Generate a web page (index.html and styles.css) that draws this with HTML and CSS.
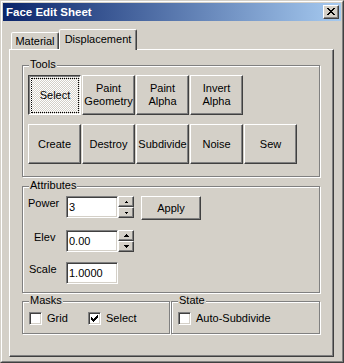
FILE: index.html
```html
<!DOCTYPE html>
<html lang="en">
<head>
<meta charset="utf-8">
<title>Face Edit Sheet</title>
<link rel="stylesheet" href="styles.css">
</head>
<body>
<div class="window">
  <div class="frame">
    <div class="titlebar">
      <span class="title">Face Edit Sheet</span>
      <button class="close raised" aria-label="Close">
        <svg width="8" height="7" viewBox="0 0 8 7"><path fill="#000" d="M0 0h2v1H0zM6 0h2v1H6zM1 1h2v1H1zM5 1h2v1H5zM2 2h4v1H2zM3 3h2v1H3zM2 4h4v1H2zM1 5h2v1H1zM5 5h2v1H5zM0 6h2v1H0zM6 6h2v1H6z"/></svg>
      </button>
    </div>
    <div class="client">
      <div class="tabs">
        <div class="tab tab-material">Material</div>
        <div class="tab tab-active">Displacement</div>
      </div>
      <div class="panel">
        <div class="group tools">
          <span class="glabel">Tools</span>
          <div class="btn-row">
            <button class="tool pressed"><span class="focus">Select</span></button>
            <button class="tool raised">Paint<br>Geometry</button>
            <button class="tool raised">Paint<br>Alpha</button>
            <button class="tool raised">Invert<br>Alpha</button>
          </div>
          <div class="btn-row">
            <button class="tool raised">Create</button>
            <button class="tool raised">Destroy</button>
            <button class="tool raised">Subdivide</button>
            <button class="tool raised">Noise</button>
            <button class="tool raised">Sew</button>
          </div>
        </div>
        <div class="group attrs">
          <span class="glabel">Attributes</span>
          <div class="arow">
            <span class="alabel lbl-power">Power</span>
            <div class="field">3</div>
            <div class="spin">
              <button class="spin-btn raised" aria-label="Up"><svg width="3" height="2" viewBox="0 0 3 2"><path d="M1 0h1v1H1zM0 1h3v1H0z"/></svg></button>
              <button class="spin-btn raised" aria-label="Down"><svg width="3" height="2" viewBox="0 0 3 2"><path d="M0 0h3v1H0zM1 1h1v1H1z"/></svg></button>
            </div>
            <button class="apply raised">Apply</button>
          </div>
          <div class="arow">
            <span class="alabel lbl-elev">Elev</span>
            <div class="field">0.00</div>
            <div class="spin">
              <button class="spin-btn raised" aria-label="Up"><svg width="5" height="3" viewBox="0 0 5 3"><path d="M2 0h1v1H2zM1 1h3v1H1zM0 2h5v1H0z"/></svg></button>
              <button class="spin-btn raised" aria-label="Down"><svg width="5" height="3" viewBox="0 0 5 3"><path d="M0 0h5v1H0zM1 1h3v1H1zM2 2h1v1H2z"/></svg></button>
            </div>
          </div>
          <div class="arow">
            <span class="alabel lbl-scale">Scale</span>
            <div class="field">1.0000</div>
          </div>
        </div>
        <div class="bottom">
          <div class="group masks">
            <span class="glabel">Masks</span>
            <div class="checks">
              <label class="check check-grid"><span class="cb"></span>Grid</label>
              <label class="check"><span class="cb"><svg width="7" height="7" viewBox="0 0 7 7"><path d="M6 0h1v1H6zM5 1h2v1H5zM0 2h1v1H0zM4 2h3v1H4zM0 3h2v1H0zM3 3h3v1H3zM0 4h5v1H0zM1 5h3v1H1zM2 6h1v1H2z"/></svg></span>Select</label>
            </div>
          </div>
          <div class="group state">
            <span class="glabel">State</span>
            <div class="checks">
              <label class="check"><span class="cb"></span>Auto-Subdivide</label>
            </div>
          </div>
        </div>
      </div>
    </div>
  </div>
</div>
</body>
</html>
```
FILE: styles.css
```css
* { box-sizing: border-box; }
html, body { margin: 0; padding: 0; }
body {
  background: #d4d0c8;
  font-family: "Liberation Sans", Arial, sans-serif;
  font-size: 11px;
  color: #000;
}
button {
  font: inherit;
  color: inherit;
  margin: 0;
  padding: 0;
  background: #d4d0c8;
  line-height: 13px;
}
.raised {
  border: 1px solid;
  border-color: #fff #404040 #404040 #fff;
  box-shadow: inset -1px -1px 0 #808080;
  background: #d4d0c8;
}
.window {
  width: 344px;
  height: 363px;
  border: 1px solid;
  border-color: #d4d0c8 #404040 #404040 #d4d0c8;
  background: #d4d0c8;
}
.frame {
  height: 100%;
  border: 1px solid;
  border-color: #fff #808080 #808080 #fff;
  padding: 1px;
  display: flex;
  flex-direction: column;
}
.titlebar {
  flex: none;
  height: 18px;
  display: flex;
  align-items: center;
  justify-content: space-between;
  padding: 0 2px 0 3px;
  background: linear-gradient(to right, #0a246a, #a6caf0);
}
.title {
  color: #fff;
  font-weight: bold;
  font-size: 11.5px;
  line-height: 13px;
}
.close {
  width: 16px;
  height: 14px;
  display: flex;
  align-items: flex-start;
  justify-content: flex-start;
  padding: 2px 0 0 3px;
}
.close svg { display: block; }
.client {
  flex: 1;
  display: flex;
  flex-direction: column;
  padding: 8px 7px 3px 6px;
}
.tabs {
  flex: none;
  height: 20px;
  display: flex;
  align-items: flex-end;
  padding-left: 2px;
}
.tab {
  height: 17px;
  border: 1px solid;
  border-bottom: 0;
  border-color: #fff #404040 transparent #fff;
  box-shadow: inset -1px 0 0 #808080;
  border-radius: 2px 2px 0 0;
  background: #d4d0c8;
  text-align: center;
  line-height: 13px;
  padding-top: 2px;
}
.tab-material { width: 48px; }
.tab-active {
  width: 78px;
  height: 21px;
  margin-bottom: -1px;
  position: relative;
  z-index: 1;
  padding-top: 3px;
}
.panel {
  flex: 1;
  display: flex;
  flex-direction: column;
  border: 1px solid;
  border-color: #fff #404040 #404040 #fff;
  box-shadow: inset -1px -1px 0 #808080;
  padding: 15px 13px 0 12px;
}
.group {
  position: relative;
  border: 1px solid #808080;
  box-shadow: 1px 1px 0 #fff, inset 1px 1px 0 #fff;
}
.glabel {
  position: absolute;
  top: -8px;
  left: 6px;
  padding: 0 1px;
  background: #d4d0c8;
  line-height: 13px;
}
.tools {
  flex: none;
  height: 112px;
  margin-bottom: 9px;
  padding: 9px 0 0 5px;
}
.btn-row {
  display: flex;
  gap: 1px;
}
.btn-row + .btn-row { margin-top: 9px; }
.tool {
  width: 53px;
  height: 40px;
  text-align: center;
}
.pressed {
  border: 1px solid;
  border-color: #404040 #fff #fff #404040;
  box-shadow: inset 1px 1px 0 #808080;
  background-color: #d4d0c8;
  background-image: repeating-conic-gradient(#fff 0 25%, #d4d0c8 0 50%);
  background-size: 2px 2px;
  padding: 3px 2px 2px 3px;
}
.focus {
  display: flex;
  align-items: center;
  justify-content: center;
  width: 100%;
  height: 100%;
  outline: 1px dotted #000;
}
.attrs {
  flex: none;
  height: 107px;
  margin-bottom: 8px;
  padding-top: 9px;
  display: flex;
  flex-direction: column;
  gap: 10px;
}
.arow {
  display: flex;
  align-items: flex-start;
}
.alabel {
  width: 43px;
  line-height: 13px;
  padding-top: 1px;
}
.lbl-power { padding-left: 5px; }
.lbl-elev { padding-left: 11px; }
.lbl-scale { padding-left: 6px; }
.field {
  width: 52px;
  height: 22px;
  border: 1px solid;
  border-color: #808080 #fff #fff #808080;
  box-shadow: inset 1px 1px 0 #404040, inset -1px -1px 0 #d4d0c8;
  background: #fff;
  padding-left: 2px;
  line-height: 20px;
}
.spin {
  display: flex;
  flex-direction: column;
  width: 16px;
}
.spin-btn {
  width: 16px;
  height: 11px;
  display: flex;
  align-items: center;
  justify-content: center;
}
.spin-btn svg { display: block; fill: #000; }
.apply {
  width: 60px;
  height: 24px;
  margin-left: 7px;
}
.bottom {
  flex: none;
  display: flex;
  height: 33px;
}
.masks { width: 148px; margin-right: 1px; }
.state { width: 149px; }
.masks, .state { padding: 10px 0 0 6px; }
.checks { display: flex; }
.check {
  display: flex;
  align-items: center;
  gap: 5px;
  line-height: 13px;
}
.check-grid { width: 59px; }
.cb {
  width: 13px;
  height: 13px;
  flex: none;
  border: 1px solid;
  border-color: #808080 #fff #fff #808080;
  box-shadow: inset 1px 1px 0 #404040, inset -1px -1px 0 #d4d0c8;
  background: #fff;
  padding: 2px 0 0 2px;
}
.cb svg { display: block; fill: #000; }
```
